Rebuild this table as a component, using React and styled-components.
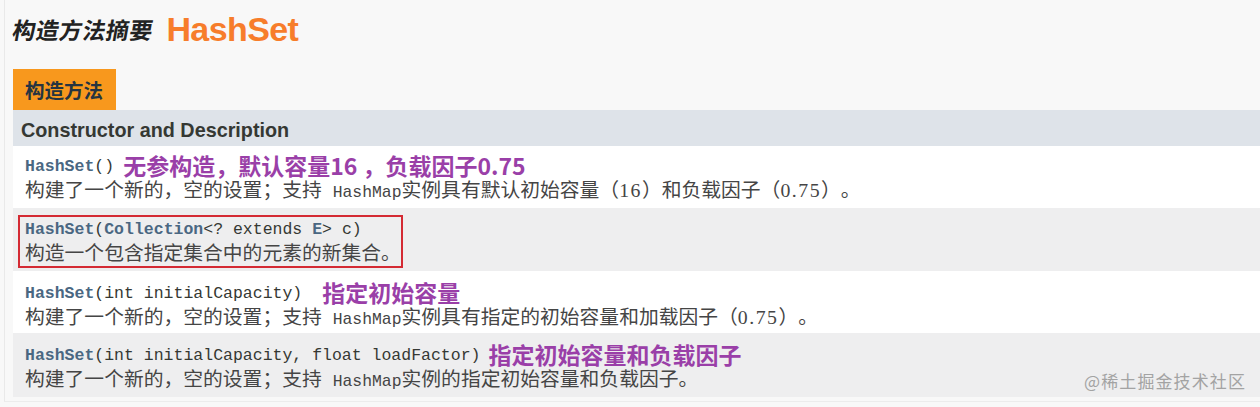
import styled, { createGlobalStyle } from "styled-components";

const GlobalStyle = createGlobalStyle`
  html, body {
    margin: 0;
    padding: 0;
    background: #f8f8f8;
  }
`;

const Page = styled.div`
  width: 1260px;
  height: 407px;
  overflow: hidden;
  box-sizing: border-box;
  padding-left: 4px;
`;

const Frame = styled.div`
  position: relative;
  border-left: 1px solid #e9e9e9;
  padding-left: 8px;
  padding-bottom: 4px;
  border-bottom: 1px solid #ececec;
`;

const TitleBar = styled.div`
  display: flex;
  align-items: center;
  height: 58px;
`;

const TitleText = styled.span`
  font-family: "Noto Sans CJK SC", sans-serif;
  font-weight: 700;
  font-size: 23px;
  color: #222;
  transform: skewX(-10deg);
  letter-spacing: 0.4px;
`;

const TitleName = styled.span`
  font-family: "Liberation Sans", Arial, sans-serif;
  font-weight: 700;
  font-size: 34px;
  letter-spacing: -0.6px;
  color: #f77d2b;
  margin-left: 13px;
`;

const Tab = styled.div`
  display: inline-block;
  margin-top: 11px;
  height: 41px;
  line-height: 41px;
  padding: 0 13px 0 12px;
  background: #f8981d;
  color: #253441;
  font-family: "Noto Sans CJK SC", sans-serif;
  font-weight: 700;
  font-size: 19.5px;
`;

const Table = styled.div`
  display: flex;
  flex-direction: column;
`;

const HeaderRow = styled.div`
  height: 36px;
  box-sizing: border-box;
  padding: 4px 0 0 8px;
  display: flex;
  align-items: center;
  background: #dee3e9;
  color: #353833;
  font-family: "Liberation Sans", Arial, sans-serif;
  font-weight: 700;
  font-size: 19.8px;
`;

const Row = styled.div`
  height: ${(p) => p.h}px;
  box-sizing: border-box;
  padding: ${(p) => p.pad}px 0 0 5px;
  background: ${(p) => (p.alt ? "#eeeeef" : "#ffffff")};
`;

const Cell = styled.div`
  display: inline-flex;
  flex-direction: column;
  padding: 0 ${(p) => (p.marked ? 0 : 4)}px 0 5px;
  border: 2px solid ${(p) => (p.marked ? "#d42a33" : "transparent")};
`;

const CodeLine = styled.div`
  display: flex;
  align-items: center;
  height: 24px;
  white-space: pre;
`;

const Code = styled.span`
  font-family: "Liberation Mono", "Courier New", monospace;
  font-size: 16.5px;
  color: #353833;
`;

const CodeName = styled.span`
  font-weight: 700;
  color: #4a6782;
`;

const Note = styled.span`
  font-family: "Noto Sans CJK SC", sans-serif;
  font-weight: 700;
  font-size: 23px;
  color: #9a3fa8;
  margin-left: ${(p) => p.gap}px;
  margin-top: -3px;
  line-height: 24px;
`;

const Desc = styled.div`
  font-family: "Liberation Serif", "Noto Sans CJK SC", serif;
  font-size: 19.8px;
  color: #454545;
  line-height: 25px;
  white-space: pre;
  text-spacing-trim: space-all;
`;

const Num = styled.span`
  letter-spacing: 1.5px;
`;

const Mono = styled.span`
  font-family: "Liberation Mono", "Courier New", monospace;
  font-size: 16.4px;
  margin-left: 6px;
`;

const Watermark = styled.div`
  position: absolute;
  right: 14px;
  bottom: 8px;
  font-family: "Noto Sans CJK SC", sans-serif;
  font-size: 17px;
  color: #a3a3a3;
  letter-spacing: 1.1px;
`;

const rows = [
  {
    name: "HashSet",
    args: "()",
    note: "无参构造，默认容量16 ，负载因子0.75",
    gap: 9,
    h: 62,
    pad: 6,
    desc: [
      "构建了一个新的，空的设置；支持 ",
      <>
        实例具有默认初始容量（<Num>16</Num>）和负载因子（<Num>0.75</Num>）。
      </>,
    ],
  },
  {
    name: "HashSet",
    args: (
      <>
        (<CodeName>Collection</CodeName>&lt;? extends <CodeName>E</CodeName>&gt; c)
      </>
    ),
    marked: true,
    h: 63,
    pad: 7,
    desc: "构造一个包含指定集合中的元素的新集合。",
  },
  {
    name: "HashSet",
    args: "(int initialCapacity)",
    note: "指定初始容量",
    gap: 20,
    h: 62,
    pad: 8,
    desc: [
      "构建了一个新的，空的设置；支持 ",
      <>
        实例具有指定的初始容量和加载因子（<Num>0.75</Num>）。
      </>,
    ],
  },
  {
    name: "HashSet",
    args: "(int initialCapacity, float loadFactor)",
    note: "指定初始容量和负载因子",
    gap: 8,
    h: 64,
    pad: 8,
    desc: ["构建了一个新的，空的设置；支持 ", "实例的指定初始容量和负载因子。"],
  },
];

export default function App() {
  return (
    <>
      <GlobalStyle />
      <Page>
        <Frame>
          <TitleBar>
            <TitleText>构造方法摘要</TitleText>
            <TitleName>HashSet</TitleName>
          </TitleBar>
          <Tab>构造方法</Tab>
          <Table>
            <HeaderRow>Constructor and Description</HeaderRow>
            {rows.map((r, i) => (
              <Row key={i} alt={i % 2 === 1} h={r.h} pad={r.pad}>
                <Cell marked={r.marked}>
                  <CodeLine>
                    <Code>
                      <CodeName>{r.name}</CodeName>
                      {r.args}
                    </Code>
                    {r.note && <Note gap={r.gap}>{r.note}</Note>}
                  </CodeLine>
                  <Desc>
                    {Array.isArray(r.desc) ? (
                      <>
                        {r.desc[0]}
                        <Mono>HashMap</Mono>
                        {r.desc[1]}
                      </>
                    ) : (
                      r.desc
                    )}
                  </Desc>
                </Cell>
              </Row>
            ))}
          </Table>
          <Watermark>@稀土掘金技术社区</Watermark>
        </Frame>
      </Page>
    </>
  );
}
